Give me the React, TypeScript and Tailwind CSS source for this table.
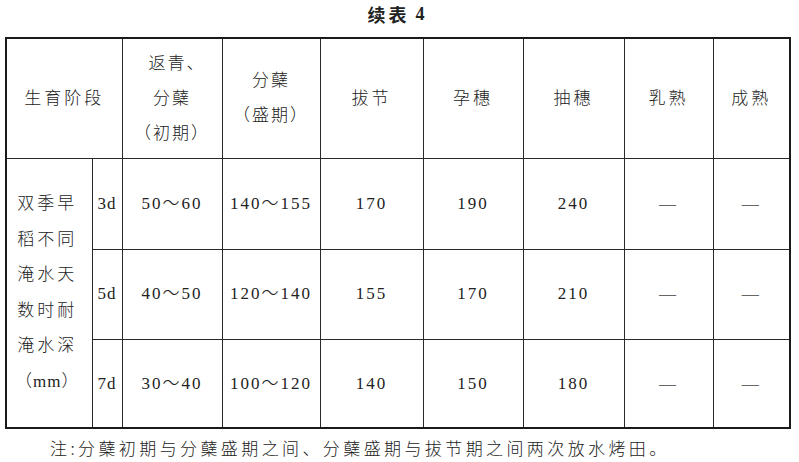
const rows = [
  { d: '3d', v: ['50～60', '140～155', '170', '190', '240', '—', '—'], h: 'h-[91px]' },
  { d: '5d', v: ['40～50', '120～140', '155', '170', '210', '—', '—'], h: 'h-[90px]' },
  { d: '7d', v: ['30～40', '100～120', '140', '150', '180', '—', '—'], h: 'h-[89px]' },
];

const cell = 'border border-[#2a2a2a] text-center align-middle p-0';

export default function App() {
  return (
    <div className="w-[799px] h-[462px] bg-white text-[#222] font-['Liberation_Serif','Noto_Sans_CJK_SC',serif] font-light text-[17px] overflow-hidden">
      {/* title */}
      <div className="h-[37px] flex items-center justify-center pb-[8px] pr-[4px] font-bold text-[18px] tracking-[3px] font-['Noto_Sans_CJK_SC',sans-serif]">
        续表<span className="font-['Liberation_Serif',serif] ml-[6px]">4</span>
      </div>

      <div className="pl-[5px]">
        <table className="table-fixed border-collapse border-2 border-[#1a1a1a] w-[784px]">
          <colgroup>
            <col className="w-[86px]" />
            <col className="w-[30px]" />
            <col className="w-[100px]" />
            <col className="w-[98px]" />
            <col className="w-[103px]" />
            <col className="w-[100px]" />
            <col className="w-[101px]" />
            <col className="w-[89px]" />
            <col className="w-[77px]" />
          </colgroup>
          <tbody>
            <tr className="h-[120px]">
              <td colSpan={2} className={`${cell} tracking-[3px]`}>生育阶段</td>
              <td className={`${cell} leading-[35px] tracking-[2px]`}>
                <div className="pl-[10px]">返青、</div>
                <div>分蘖</div>
                <div>（初期）</div>
              </td>
              <td className={`${cell} leading-[35px] tracking-[2px]`}>
                <div>分蘖</div>
                <div>（盛期）</div>
              </td>
              <td className={`${cell} tracking-[3px]`}>拔节</td>
              <td className={`${cell} tracking-[3px]`}>孕穗</td>
              <td className={`${cell} tracking-[3px]`}>抽穗</td>
              <td className={`${cell} tracking-[3px]`}>乳熟</td>
              <td className={`${cell} tracking-[3px]`}>成熟</td>
            </tr>
            {rows.map((r, i) => (
              <tr key={r.d} className={r.h}>
                {i === 0 && (
                  <td rowSpan={3} className={`${cell} leading-[35.5px] tracking-[3px] pr-[4px]`}>
                    <div>双季早</div>
                    <div>稻不同</div>
                    <div>淹水天</div>
                    <div>数时耐</div>
                    <div>淹水深</div>
                    <div className="tracking-[1px]">（mm）</div>
                  </td>
                )}
                <td className={`${cell} tracking-[1px]`}>{r.d}</td>
                {r.v.map((v, j) => (
                  <td key={j} className={`${cell} tracking-[2px] ${v === '—' ? 'text-[#666]' : ''}`}>
                    {v}
                  </td>
                ))}
              </tr>
            ))}
          </tbody>
        </table>
      </div>

      <p className="pl-[50px] mt-[7px] leading-[24px] tracking-[3.4px] font-['Noto_Sans_CJK_SC',sans-serif]">
        注:分蘖初期与分蘖盛期之间、分蘖盛期与拔节期之间两次放水烤田。
      </p>
    </div>
  );
}
